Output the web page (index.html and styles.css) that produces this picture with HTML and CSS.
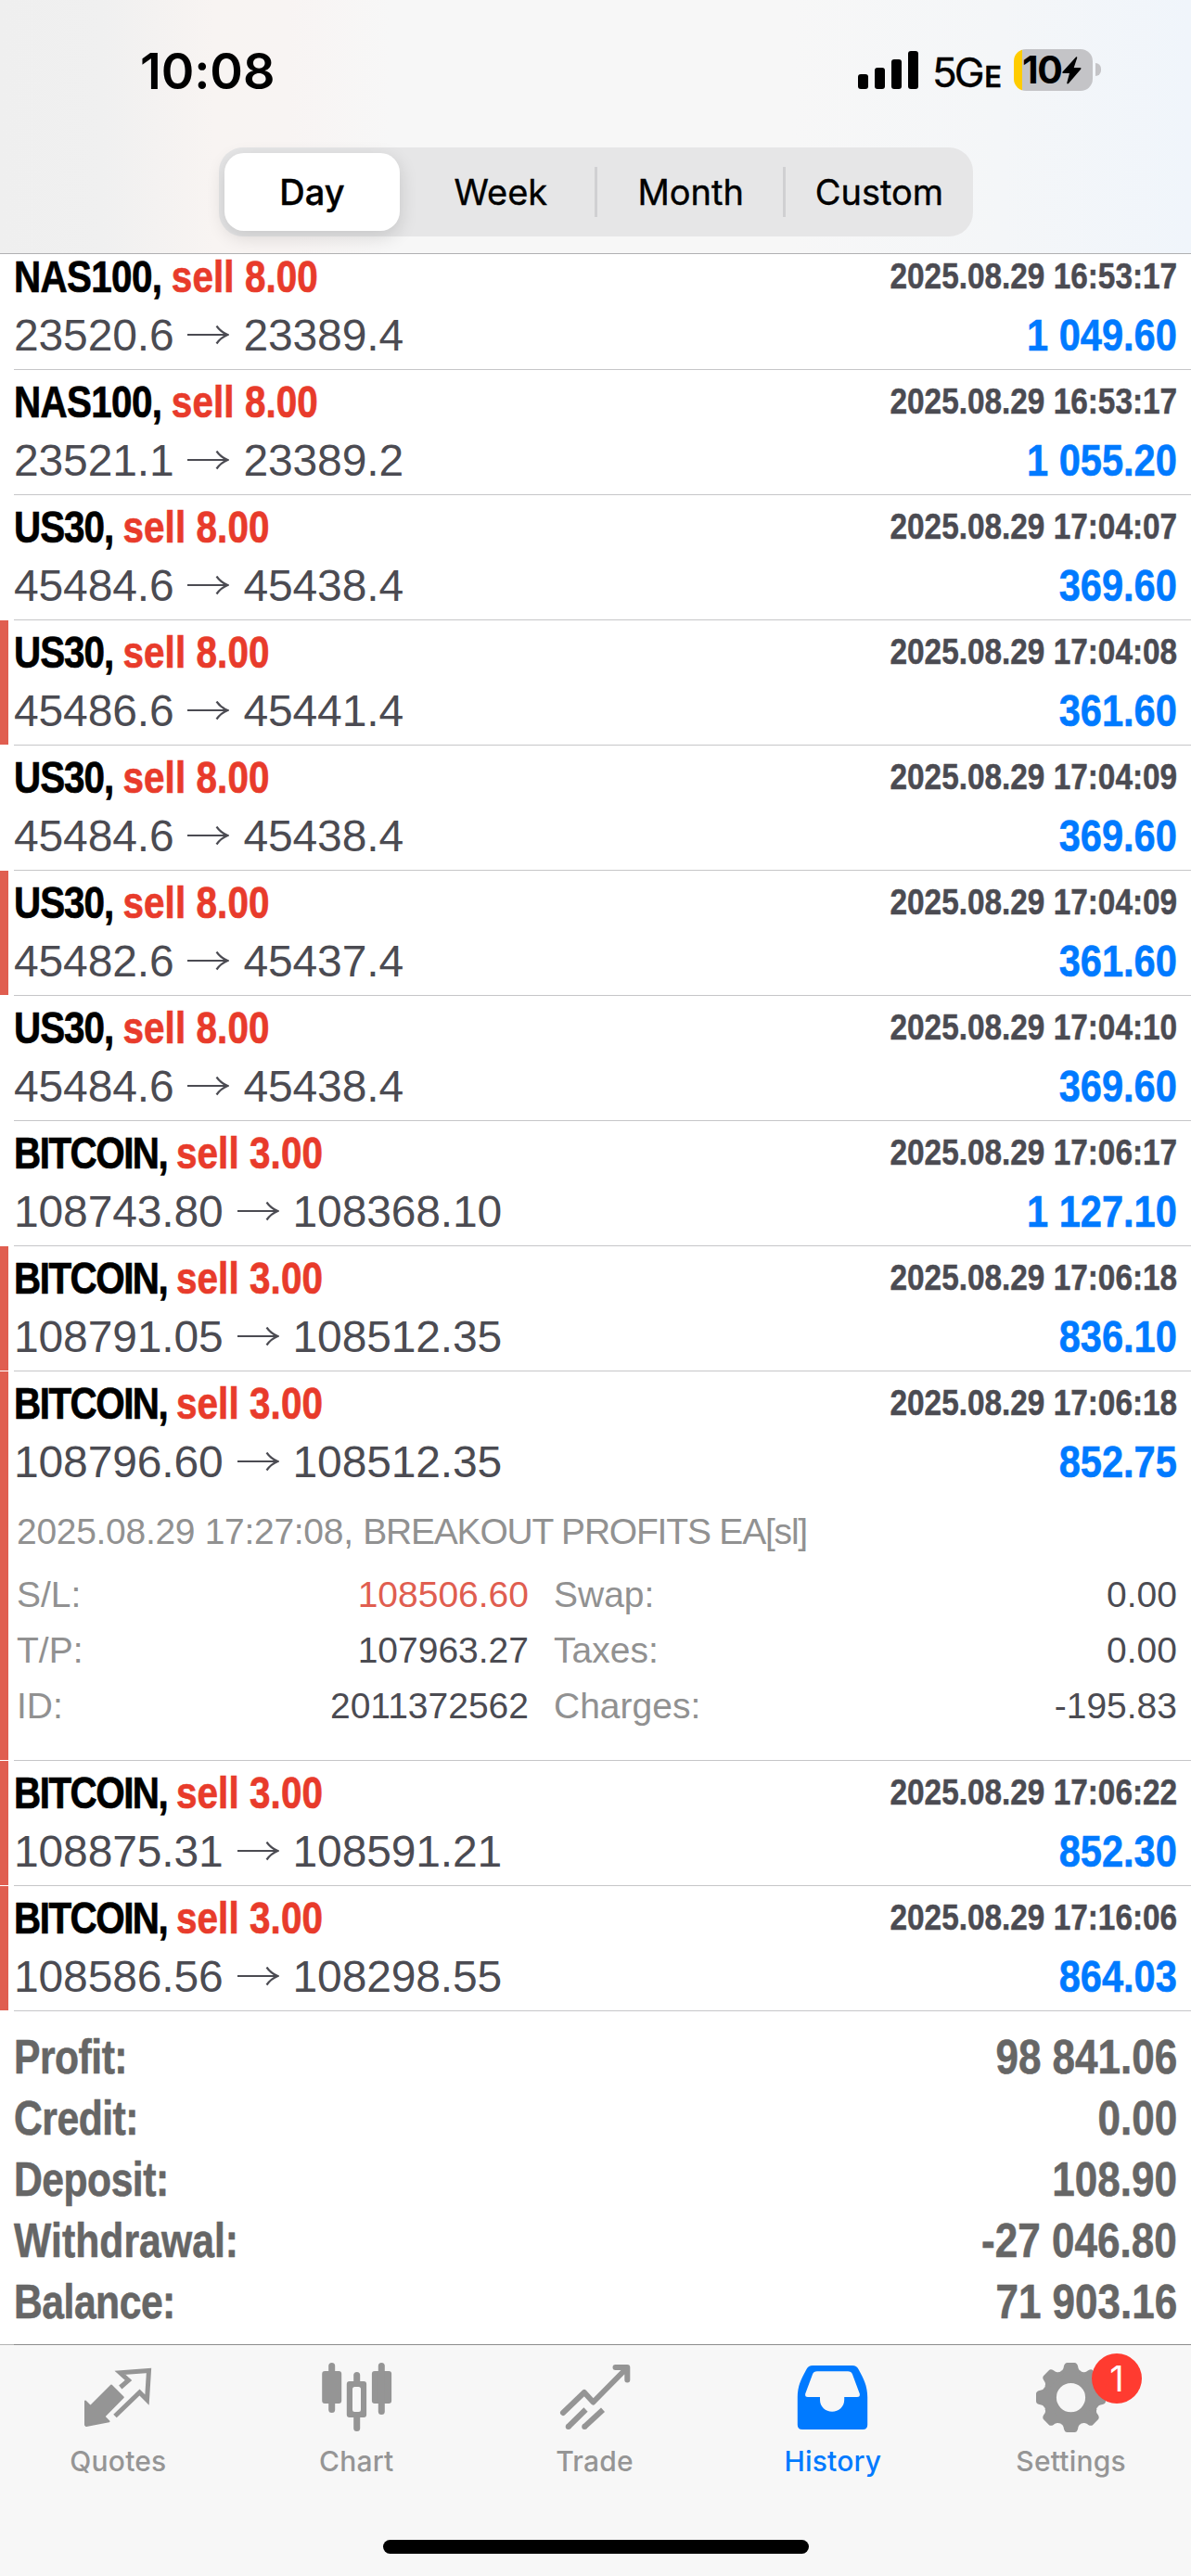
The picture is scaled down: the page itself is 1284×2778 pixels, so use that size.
FILE: index.html
```html
<!DOCTYPE html>
<html lang="en">
<head>
<meta charset="utf-8">
<title>History</title>
<link rel="stylesheet" href="styles.css">
<script src="app.js" defer></script>
</head>
<body>
<header class="header">
  <div class="status">
    <span class="clock">10:08</span>
    <div class="status-right">
      <svg class="signal" width="65" height="42" viewBox="0 0 65 42"><rect x="0" y="25" width="11" height="16" rx="3"/><rect x="18" y="18" width="11" height="23" rx="3"/><rect x="36" y="9" width="11" height="32" rx="3"/><rect x="54" y="0" width="11" height="41" rx="3"/></svg>
      <span class="net">5G<span class="net-e">E</span></span>
      <div class="battery"><span>10</span><svg width="21" height="30" viewBox="0 0 21 30"><path d="M15 0.5L0.5 16.5Q0 18 1.5 18H8L5.2 28.5Q5.5 30 7 29L20.3 13.5Q21 12 19.5 12H12.700L16.200 1.500Q16.500 -.5 15 .5Z"/></svg></div>
      <div class="nub"></div>
    </div>
  </div>
  <nav class="segments">
    <div class="segment active">Day</div>
    <div class="segment">Week</div>
    <div class="segment divided">Month</div>
    <div class="segment divided">Custom</div>
  </nav>
</header>
<main class="list" id="list"></main>
<section class="totals">
  <div class="total"><span class="tl">Profit:</span><span class="tv">98 841.06</span></div>
  <div class="total"><span class="tl">Credit:</span><span class="tv">0.00</span></div>
  <div class="total"><span class="tl">Deposit:</span><span class="tv">108.90</span></div>
  <div class="total"><span class="tl wide">Withdrawal:</span><span class="tv">-27 046.80</span></div>
  <div class="total"><span class="tl">Balance:</span><span class="tv">71 903.16</span></div>
</section>
<footer class="footer">
  <nav class="tabs">
    <div class="tab">
      <svg class="icon" viewBox="0 0 80 80"><path fill="currentColor" stroke="currentColor" stroke-width="2" stroke-linejoin="round" d="M4 44.500L9.500 50L32 27.500L44.800 40.200L24.300 61L29.500 66.300L5 71L4 70Z"/><path fill="none" stroke="currentColor" stroke-width="5" d="M41.800 29.500L50.500 22L41.500 13.800L72.500 11.500L70.500 43L62.500 35L36 60.500"/></svg>
      <span>Quotes</span>
    </div>
    <div class="tab">
      <svg class="icon" viewBox="0 0 80 80" fill="currentColor"><rect x="2.200" y="12" width="21" height="35" rx="3"/><rect x="9.200" y="3" width="7" height="54" rx="3.500"/><rect x="55.900" y="12" width="21.200" height="35" rx="3"/><rect x="62.800" y="3" width="7" height="56" rx="3.500"/><rect x="36.200" y="13" width="7" height="20" rx="3.500"/><rect x="36.200" y="58" width="7" height="19" rx="3.500"/><path fill="#f7f7f7" d="M35 29h9v27h-9z"/><path fill-rule="evenodd" d="M31.800 23h15.300a3 3 0 0 1 3 3v33a3 3 0 0 1-3 3H31.800a3 3 0 0 1-3-3V26a3 3 0 0 1 3-3ZM37.500 29a2.500 2.500 0 0 0-2.500 2.500v22a2.500 2.500 0 0 0 2.500 2.500h4a2.500 2.500 0 0 0 2.500-2.500v-22a2.500 2.500 0 0 0-2.500-2.500Z"/></svg>
      <span>Chart</span>
    </div>
    <div class="tab">
      <svg class="icon" viewBox="0 0 80 80" fill="none" stroke="currentColor" stroke-width="6" stroke-linecap="round" stroke-linejoin="round"><path d="M5 57L27.900 35L37.500 45.500L74 8.500M61.500 8H74.300V21.500"/><path stroke-linecap="butt" d="M10.700 72L29.500 53.500M28.200 72L48 53.800"/><path d="M10.700 72h.01M28.200 72h.01"/></svg>
      <span>Trade</span>
    </div>
    <div class="tab selected">
      <svg class="icon" viewBox="0 0 80 80" fill="currentColor"><path fill-rule="evenodd" d="M17 6H60Q64.500 6 66.500 10C72 20 76.200 28 76.200 40V70Q76.200 75 71.200 75H6Q.8 75 .8 70V40C.8 28 5 20 10.500 10Q12.500 6 17 6ZM22 12.300Q18.200 12.300 17 15.500L9.200 36.500Q8.500 40 12 40H25V43C25 50.500 31 55.700 38.100 55.700S51.200 50.500 51.200 43V40H65Q68.500 40 67.800 36.500L60 15.500Q58.700 12.300 55 12.300Z"/></svg>
      <span>History</span>
    </div>
    <div class="tab">
      <svg class="icon" viewBox="0 0 80 80" fill="currentColor"><defs><path id="tooth" d="M-13 -24L-11 -28.500C-8.500 -29.500 -8 -31 -7.500 -34Q-6.500 -37.500 -4 -37.500H4Q6.500 -37.500 7.500 -34C8 -31 8.500 -29.500 11 -28.500L13 -24Z"/></defs><g transform="translate(38.500 40.600)"><circle r="22.300" fill="none" stroke="currentColor" stroke-width="13.400"/><use href="#tooth"/><use href="#tooth" transform="rotate(45)"/><use href="#tooth" transform="rotate(90)"/><use href="#tooth" transform="rotate(135)"/><use href="#tooth" transform="rotate(180)"/><use href="#tooth" transform="rotate(225)"/><use href="#tooth" transform="rotate(270)"/><use href="#tooth" transform="rotate(315)"/></g></svg>
      <span>Settings</span>
      <b class="badge">1</b>
    </div>
  </nav>
  <div class="home"></div>
</footer>
</body>
</html>
```
FILE: styles.css
```css
* { box-sizing: border-box; }
body { margin: 0; width: 1284px; height: 2778px; overflow: hidden; background: #fff; font-family: "Liberation Sans", Arial, sans-serif; display: flex; flex-direction: column; }

.header { height: 274px; flex: none; border-bottom: 1px solid #b0b0b2; background: linear-gradient(90deg, #efefef 0, #f0f0f0 110px, #f8f4f2 230px, #f8f4f3 310px, #f7f7f7 420px, #f7f7f7 850px, #f4f6f8 1080px, #f0f5fb 1284px); font-family: Inter, sans-serif; color: #000; }
.status { height: 159px; padding: 38px 97px 0 151px; display: flex; justify-content: space-between; align-items: flex-start; }
.clock { font-size: 54px; line-height: 78px; font-weight: 600; letter-spacing: -0.1px; }
.status-right { display: flex; align-items: flex-start; }
.signal { margin-top: 17px; }
.net { width: 77px; margin: 15px 11px 0 15px; font-size: 44px; line-height: 50px; display: flex; justify-content: space-between; align-items: baseline; letter-spacing: -3px; -webkit-text-stroke: .4px #000; }
.net-e { font-size: 31px; font-weight: 600; letter-spacing: 0; margin-right: 2px; }
.battery { width: 85px; height: 45px; margin-top: 15px; border-radius: 13px; background: linear-gradient(90deg, #ffcc00 9px, #c4c4c7 9px); display: flex; align-items: center; padding-left: 9px; gap: 1px; font-size: 41px; line-height: 45px; font-weight: 700; letter-spacing: -1.500px; }
.nub { width: 6px; height: 14px; margin: 30px 0 0 3px; border-radius: 0 6px 6px 0; background: #c4c4c7; }
.segments { width: 813px; height: 96px; margin-left: 236px; border-radius: 26px; background: #e6e6e7; display: grid; grid-template-columns: repeat(4, 1fr); align-items: center; }
.segment { font-size: 38px; line-height: 54px; font-weight: 400; text-align: center; padding-right: 2px; -webkit-text-stroke: .4px #000; }
.active { width: 189px; height: 84px; line-height: 84px; margin-left: 6px; padding: 0; font-weight: 500; background: #fff; border-radius: 21px; box-shadow: 0 6px 20px rgba(0,0,0,.14); }
.divided { border-left: 3px solid #d0d0d2; margin-left: -2px; padding-right: 0; }

.row { height: 135px; display: grid; grid-template-columns: 9px 1fr; column-gap: 6px; }
.row:first-child { height: 125px; }
.row:first-child .content { margin-top: -10px; }
.row.open { height: 420px; }
.mark { margin-bottom: 1px; }
.row.red .mark { background: #e05e50; }
.content { border-bottom: 1px solid #c6c6c8; padding-right: 15px; }
.line { display: flex; justify-content: space-between; align-items: flex-start; white-space: nowrap; }
.top { height: 68px; }
.name { font-size: 48px; font-weight: 700; line-height: 70px; transform: scaleX(.842); transform-origin: 0 50%; color: #e83b2b; white-space: pre; letter-spacing: .1px; -webkit-text-stroke: .7px currentColor; }
.sym { color: #000; letter-spacing: -0.8px; }
.sym.short { letter-spacing: -1.200px; }
.sym.tight { letter-spacing: -1.800px; }
.time { font-size: 39px; font-weight: 700; line-height: 68px; color: #4b4b52; transform: scaleX(.855); transform-origin: 100% 50%; -webkit-text-stroke: .5px currentColor; }
.price { display: flex; align-items: center; font-size: 48px; line-height: 60px; letter-spacing: -0.15px; color: #4b4b52; }
.arrow { margin: 0 15px; }
.value { font-size: 48px; font-weight: 700; line-height: 60px; color: #007aff; transform: scaleX(.866); transform-origin: 100% 50%; -webkit-text-stroke: .6px currentColor; }
.comment { margin-top: 15px; padding-left: 3px; font-size: 39px; line-height: 60px; letter-spacing: -1.200px; color: #919191; white-space: pre; }
.closed { letter-spacing: -0.3px; }
.details { margin: 8px 0 0 3px; display: grid; grid-template-columns: 552px 1fr; column-gap: 27px; font-size: 39px; line-height: 60px; color: #919191; }
.details div { display: flex; justify-content: space-between; }
.details b { font-weight: 400; color: #4b4b52; }
.details .sl { color: #e05e50; }

.totals { padding: 16px 15px 0; height: 359px; flex: none; }
.total { display: flex; justify-content: space-between; font-size: 52px; line-height: 66px; font-weight: 700; color: #666; -webkit-text-stroke: .6px currentColor; }
.tl { transform: scaleX(.82); transform-origin: 0 50%; letter-spacing: -0.6px; }
.tl.wide { letter-spacing: .1px; }
.tv { transform: scaleX(.847); transform-origin: 100% 50%; }

.footer { height: 250px; flex: none; background: linear-gradient(90deg, #b4b4b4 15px, #8c8c8c 15px) 0 0 / 100% 1px no-repeat, #f7f7f7; padding-top: 17px; font-family: Inter, sans-serif; display: flex; flex-direction: column; align-items: center; }
.tabs { width: 1284px; height: 194px; display: grid; grid-template-columns: repeat(5, 1fr); }
.tab { position: relative; display: flex; flex-direction: column; align-items: center; color: #959595; font-size: 30px; font-weight: 500; line-height: 36px; letter-spacing: .2px; }
.tab span { margin-right: 2px; }
.tab.selected { color: #007aff; }
.icon { width: 80px; height: 80px; margin-bottom: 11px; }
.badge { position: absolute; left: 150px; top: -7px; width: 54px; height: 54px; border-radius: 50%; background: #ff3b30; color: #fff; font-size: 38px; font-weight: 400; line-height: 54px; text-align: center; }
.home { width: 459px; height: 15px; border-radius: 8px; background: #000; }
```
FILE: app.js
```js
const deals = [
  ["NAS100", "8.00", "16:53:17", "23520.6", "23389.4", "1 049.60", ""],
  ["NAS100", "8.00", "16:53:17", "23521.1", "23389.2", "1 055.20", ""],
  ["US30", "8.00", "17:04:07", "45484.6", "45438.4", "369.60", ""],
  ["US30", "8.00", "17:04:08", "45486.6", "45441.4", "361.60", "red"],
  ["US30", "8.00", "17:04:09", "45484.6", "45438.4", "369.60", ""],
  ["US30", "8.00", "17:04:09", "45482.6", "45437.4", "361.60", "red"],
  ["US30", "8.00", "17:04:10", "45484.6", "45438.4", "369.60", ""],
  ["BITCOIN", "3.00", "17:06:17", "108743.80", "108368.10", "1 127.10", ""],
  ["BITCOIN", "3.00", "17:06:18", "108791.05", "108512.35", "836.10", "red"],
  ["BITCOIN", "3.00", "17:06:18", "108796.60", "108512.35", "852.75", "red open"],
  ["BITCOIN", "3.00", "17:06:22", "108875.31", "108591.21", "852.30", "red"],
  ["BITCOIN", "3.00", "17:16:06", "108586.56", "108298.55", "864.03", "red"]
];
const spacing = { US30: " short", BITCOIN: " tight" };
const arrow = '<svg class="arrow" width="45" height="22" viewBox="0 0 45 22" fill="none" stroke="currentColor" stroke-width="2.2"><path d="M0 10H42M31.500 .5Q36 7 43.500 10Q36 13 31.500 19.500"/></svg>';
const details = `<div class="comment"><span class="closed">2025.08.29 17:27:08, </span>BREAKOUT PROFITS EA[sl]</div>
<div class="details">
<div>S/L:<b class="sl">108506.60</b></div><div>Swap:<b>0.00</b></div>
<div>T/P:<b>107963.27</b></div><div>Taxes:<b>0.00</b></div>
<div>ID:<b>2011372562</b></div><div>Charges:<b>-195.83</b></div>
</div>`;
document.getElementById("list").innerHTML = deals.map(([sym, lot, time, from, to, value, cls]) => `
<article class="row ${cls}"><div class="mark"></div><div class="content">
<div class="line top"><span class="name"><span class="sym${spacing[sym] || ""}">${sym}, </span>sell ${lot}</span><span class="time">2025.08.29 ${time}</span></div>
<div class="line"><span class="price">${from}${arrow}${to}</span><span class="value">${value}</span></div>
${cls.includes("open") ? details : ""}
</div></article>`).join("");
```
